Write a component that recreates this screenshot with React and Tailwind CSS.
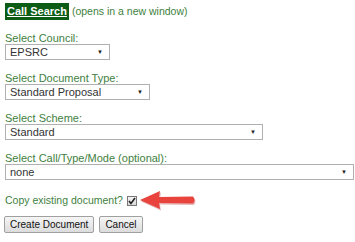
import { useState } from 'react'

const Field = ({ label, value, width }) => (
  <div className="mb-[12px]">
    <p className="text-[11px] leading-[12px] h-[12px] text-[#417f41]">{label}</p>
    <div className={`relative h-[16px] border border-[#b0b0b0] bg-white ${width}`}>
      <span className="absolute left-[4px] top-0 text-[11px] leading-[14px] text-[#333]">{value}</span>
      <span className="absolute right-[6px] top-[1px] text-[6px] leading-[12px] text-[#222]">▼</span>
    </div>
  </div>
)

const Arrow = () => (
  <svg width="62" height="22" viewBox="0 0 62 22" className="ml-[1px] -mt-[2px]">
    <path d="M2 11 L22 2 L21 8 L55 7.5 Q58 11 55 14.5 L21 14 L22 20 Z" fill="#b53030" opacity="0.35" transform="translate(1 1.5)" />
    <path d="M2 11 L22 2 L21 8 L55 7.5 Q58 11 55 14.5 L21 14 L22 20 Z" fill="#e8433d" />
  </svg>
)

const Check = ({ checked, onClick }) => (
  <span onClick={onClick} className="ml-[4px] w-[10px] h-[10px] border border-[#777] bg-gradient-to-b from-[#f4f4f4] to-[#d8d8d8] flex items-center justify-center">
    {checked && (
      <svg width="8" height="8" viewBox="0 0 8 8">
        <path d="M1 4 L3 6.5 L7 1" fill="none" stroke="#222" strokeWidth="1.6" />
      </svg>
    )}
  </span>
)

export default function App() {
  const [ copy, setCopy ] = useState(true)

  return (
    <main className="w-[355px] h-[242px] bg-white font-['Liberation_Sans',Arial,sans-serif] overflow-hidden">
      <div className="pl-[5px] pt-[3px]">
        <div className="flex items-center h-[17px] mb-[12px]">
          <span className="bg-[#0d5c15] px-[2px] h-[17px] flex items-center text-white font-bold underline text-[11px]">Call Search</span>
          <span className="ml-[3px] text-[10.5px] text-[#417f41]">(opens in a new window)</span>
        </div>

        <Field label="Select Council:" value="EPSRC" width="w-[105px]" />
        <Field label="Select Document Type:" value="Standard Proposal" width="w-[145px]" />
        <Field label="Select Scheme:" value="Standard" width="w-[258px]" />
        <Field label="Select Call/Type/Mode (optional):" value="none" width="w-[349px]" />

        <div className="flex items-center h-[14px] mt-[14px] mb-[8px]">
          <span className="text-[10.5px] text-[#417f41]">Copy existing document?</span>
          <Check checked={copy} onClick={() => setCopy(!copy)} />
          <Arrow />
        </div>

        <div className="flex gap-[5px] -ml-[1px]">
          <button className="h-[17px] px-[5px] text-[10px] leading-[15px] text-[#111] border border-[#a0a0a0] rounded-[2px] bg-gradient-to-b from-[#f6f6f6] to-[#dcdcdc]">Create Document</button>
          <button className="h-[17px] px-[5px] text-[10px] leading-[15px] text-[#111] border border-[#a0a0a0] rounded-[2px] bg-gradient-to-b from-[#f6f6f6] to-[#dcdcdc]">Cancel</button>
        </div>
      </div>
    </main>
  )
}
